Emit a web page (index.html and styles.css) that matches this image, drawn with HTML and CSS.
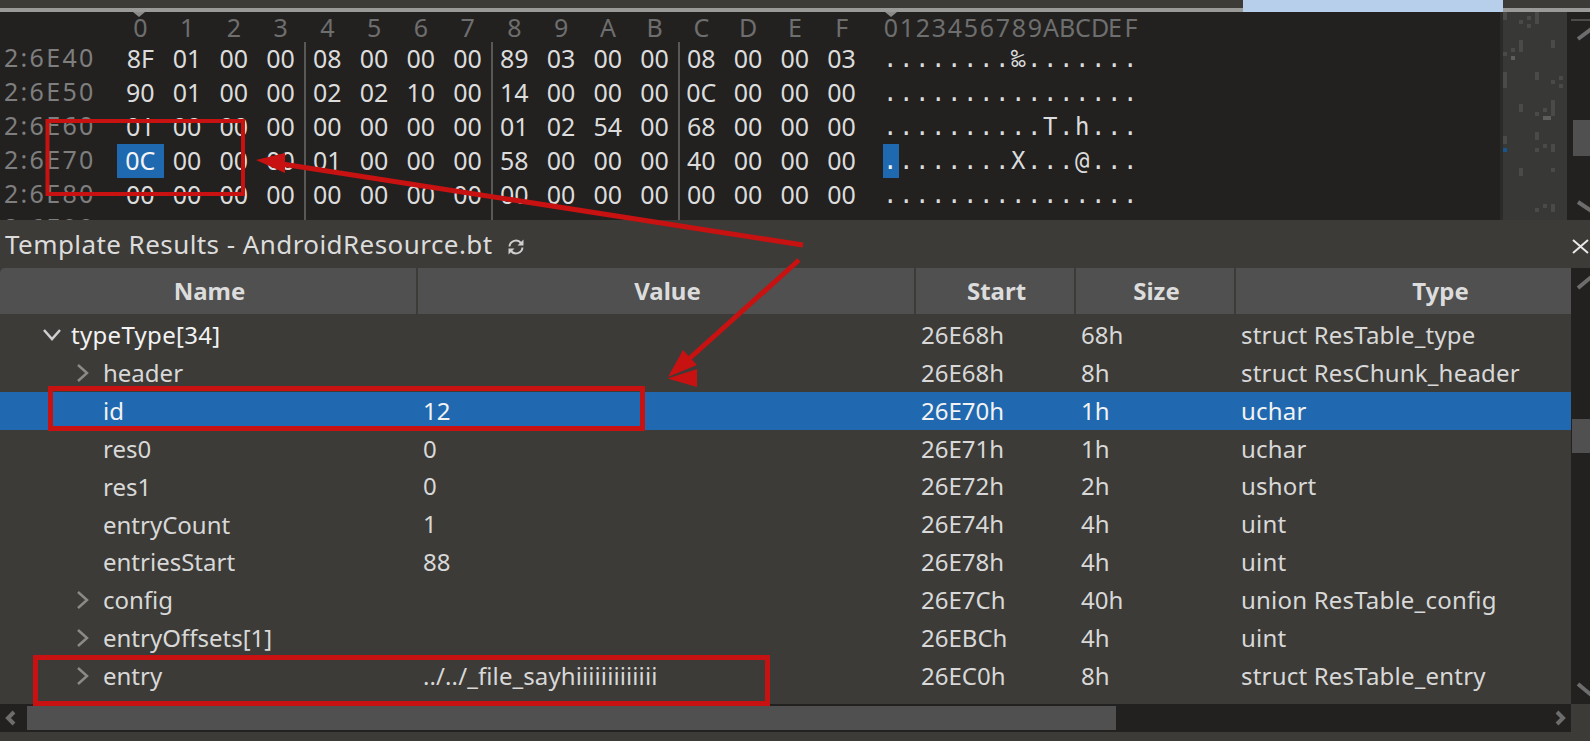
FILE: index.html
```html
<!DOCTYPE html>
<html lang="en">
<head>
<meta charset="utf-8">
<title>Template Results - AndroidResource.bt</title>
<link rel="stylesheet" href="styles.css">
</head>
<body>
<div class="app">
  <div class="ruler">
    <div class="ruler-track"></div>
    <div class="ruler-thumb"></div>
    <div class="ruler-track ruler-end"></div>
  </div>

  <section class="hexpane">
    <div class="hexview">
      <span class="marker marker-hex"></span>
      <span class="marker marker-asc"></span>
      <div class="hexrow hexhead">
        <span class="addr"></span>
        <span class="cell">0</span><span class="cell">1</span><span class="cell">2</span><span class="cell">3</span>
        <span class="cell">4</span><span class="cell">5</span><span class="cell">6</span><span class="cell">7</span>
        <span class="cell">8</span><span class="cell">9</span><span class="cell">A</span><span class="cell">B</span>
        <span class="cell">C</span><span class="cell">D</span><span class="cell">E</span><span class="cell">F</span>
        <span class="ascii ascii-head"><i>0</i><i>1</i><i>2</i><i>3</i><i>4</i><i>5</i><i>6</i><i>7</i><i>8</i><i>9</i><i>A</i><i>B</i><i>C</i><i>D</i><i>E</i><i>F</i></span>
      </div>
      <div class="hexrow">
        <span class="addr">2:6E40</span>
        <span class="cell">8F</span><span class="cell">01</span><span class="cell">00</span><span class="cell">00</span>
        <span class="cell sep">08</span><span class="cell">00</span><span class="cell">00</span><span class="cell">00</span>
        <span class="cell sep">89</span><span class="cell">03</span><span class="cell">00</span><span class="cell">00</span>
        <span class="cell sep">08</span><span class="cell">00</span><span class="cell">00</span><span class="cell">03</span>
        <span class="ascii">........‰.......</span>
      </div>
      <div class="hexrow">
        <span class="addr">2:6E50</span>
        <span class="cell">90</span><span class="cell">01</span><span class="cell">00</span><span class="cell">00</span>
        <span class="cell sep">02</span><span class="cell">02</span><span class="cell">10</span><span class="cell">00</span>
        <span class="cell sep">14</span><span class="cell">00</span><span class="cell">00</span><span class="cell">00</span>
        <span class="cell sep">0C</span><span class="cell">00</span><span class="cell">00</span><span class="cell">00</span>
        <span class="ascii">................</span>
      </div>
      <div class="hexrow">
        <span class="addr">2:6E60</span>
        <span class="cell">01</span><span class="cell">00</span><span class="cell">00</span><span class="cell">00</span>
        <span class="cell sep">00</span><span class="cell">00</span><span class="cell">00</span><span class="cell">00</span>
        <span class="cell sep">01</span><span class="cell">02</span><span class="cell">54</span><span class="cell">00</span>
        <span class="cell sep">68</span><span class="cell">00</span><span class="cell">00</span><span class="cell">00</span>
        <span class="ascii">..........T.h...</span>
      </div>
      <div class="hexrow">
        <span class="addr">2:6E70</span>
        <span class="cell cell-on">0C</span><span class="cell">00</span><span class="cell">00</span><span class="cell">00</span>
        <span class="cell sep">01</span><span class="cell">00</span><span class="cell">00</span><span class="cell">00</span>
        <span class="cell sep">58</span><span class="cell">00</span><span class="cell">00</span><span class="cell">00</span>
        <span class="cell sep">40</span><span class="cell">00</span><span class="cell">00</span><span class="cell">00</span>
        <span class="ascii"><b class="ascii-on">.</b>.......X...@...</span>
      </div>
      <div class="hexrow">
        <span class="addr">2:6E80</span>
        <span class="cell">00</span><span class="cell">00</span><span class="cell">00</span><span class="cell">00</span>
        <span class="cell sep">00</span><span class="cell">00</span><span class="cell">00</span><span class="cell">00</span>
        <span class="cell sep">00</span><span class="cell">00</span><span class="cell">00</span><span class="cell">00</span>
        <span class="cell sep">00</span><span class="cell">00</span><span class="cell">00</span><span class="cell">00</span>
        <span class="ascii">................</span>
      </div>
      <div class="hexrow">
        <span class="addr">2:6E90</span>
        <span class="cell">00</span><span class="cell">00</span><span class="cell">00</span><span class="cell">00</span>
        <span class="cell sep">00</span><span class="cell">00</span><span class="cell">00</span><span class="cell">00</span>
        <span class="cell sep">00</span><span class="cell">00</span><span class="cell">00</span><span class="cell">00</span>
        <span class="cell sep">00</span><span class="cell">00</span><span class="cell">00</span><span class="cell">00</span>
      </div>
    </div>

    <svg class="minimap" viewBox="9 36 192 624" width="64" height="208" aria-hidden="true">
      <g fill="#4a4a48">
        <rect x="9" y="36" width="12" height="24"/><rect x="105" y="36" width="12" height="36"/>
        <rect x="57" y="60" width="12" height="12"/><rect x="81" y="48" width="12" height="12"/>
        <rect x="81" y="72" width="12" height="12"/><rect x="57" y="120" width="12" height="36"/>
        <rect x="153" y="120" width="12" height="24"/><rect x="33" y="144" width="12" height="12"/>
        <rect x="9" y="156" width="12" height="12"/><rect x="9" y="216" width="12" height="48"/>
        <rect x="105" y="216" width="12" height="24"/><rect x="153" y="240" width="12" height="12"/>
        <rect x="177" y="228" width="12" height="12"/><rect x="177" y="252" width="12" height="12"/>
        <rect x="57" y="312" width="12" height="24"/><rect x="153" y="300" width="12" height="48"/>
        <rect x="129" y="324" width="12" height="12"/><rect x="105" y="336" width="12" height="12"/>
        <rect x="9" y="408" width="12" height="24"/><rect x="105" y="396" width="12" height="24"/>
        <rect x="129" y="432" width="12" height="12"/><rect x="153" y="432" width="12" height="24"/>
        <rect x="105" y="444" width="12" height="12"/><rect x="57" y="504" width="12" height="24"/>
        <rect x="153" y="504" width="12" height="12"/><rect x="129" y="612" width="12" height="12"/>
        <rect x="153" y="612" width="12" height="24"/><rect x="105" y="624" width="12" height="12"/>
      </g>
      <rect x="33" y="168" width="12" height="12" fill="#5e5e5c"/>
      <rect x="129" y="348" width="24" height="12" fill="#5e5e5c"/>
      <rect x="9" y="444" width="12" height="12" fill="#17558f"/>
    </svg>

    <svg class="hexscroll" width="23" height="208" aria-hidden="true">
      <rect x="4" y="7" width="19" height="2" fill="#4c4c4a"/>
      <path d="M11 27 L23 18 L35 27" class="arrow"/>
      <rect x="6" y="108" width="17" height="36" fill="#505050"/>
      <path d="M11 190 L23 198 L35 190" class="arrow"/>
    </svg>
  </section>

  <section class="results">
    <div class="results-title">
      <span class="title-text">Template Results - AndroidResource.bt</span>
      <svg class="refresh" width="20" height="20" viewBox="0 0 20 20" aria-hidden="true">
        <path d="M3.5 9.5 A6.5 6.5 0 0 1 15 6" class="refresh-arc"/>
        <path d="M16.5 10.5 A6.5 6.5 0 0 1 5 14" class="refresh-arc"/>
        <path d="M17.5 2.5 V8.5 H11.5 Z" fill="#cfcfcf"/>
        <path d="M2.5 17.5 V11.5 H8.5 Z" fill="#cfcfcf"/>
      </svg>
      <svg class="close" width="17" height="15" viewBox="0 0 17 15" aria-hidden="true">
        <path d="M1 1 L16 14 M16 1 L1 14" stroke="#e8e8e8" stroke-width="2" fill="none"/>
      </svg>
    </div>

    <div class="tablewrap">
      <div class="table">
        <div class="thead">
          <div class="th">Name</div>
          <div class="th">Value</div>
          <div class="th">Start</div>
          <div class="th">Size</div>
          <div class="th th-type">Type</div>
        </div>
        <div class="tbody">
          <div class="tr">
            <div class="td col-name lvl0">
              <svg class="tw" width="22" height="14" viewBox="0 0 22 14" aria-hidden="true"><path d="M2 2 L10 11 L18 2" class="tw-open"/></svg>typeType[34]
            </div>
            <div class="td col-value"></div><div class="td col-num">26E68h</div><div class="td col-num">68h</div><div class="td col-type">struct ResTable_type</div>
          </div>
          <div class="tr">
            <div class="td col-name lvl1">
              <svg class="tw" width="14" height="20" viewBox="0 0 14 20" aria-hidden="true"><path d="M2 2 L11 10 L2 18" class="tw-closed"/></svg>header
            </div>
            <div class="td col-value"></div><div class="td col-num">26E68h</div><div class="td col-num">8h</div><div class="td col-type">struct ResChunk_header</div>
          </div>
          <div class="tr tr-on">
            <div class="td col-name lvl1 leaf">id</div>
            <div class="td col-value">12</div><div class="td col-num">26E70h</div><div class="td col-num">1h</div><div class="td col-type">uchar</div>
          </div>
          <div class="tr">
            <div class="td col-name lvl1 leaf">res0</div>
            <div class="td col-value">0</div><div class="td col-num">26E71h</div><div class="td col-num">1h</div><div class="td col-type">uchar</div>
          </div>
          <div class="tr">
            <div class="td col-name lvl1 leaf">res1</div>
            <div class="td col-value">0</div><div class="td col-num">26E72h</div><div class="td col-num">2h</div><div class="td col-type">ushort</div>
          </div>
          <div class="tr">
            <div class="td col-name lvl1 leaf">entryCount</div>
            <div class="td col-value">1</div><div class="td col-num">26E74h</div><div class="td col-num">4h</div><div class="td col-type">uint</div>
          </div>
          <div class="tr">
            <div class="td col-name lvl1 leaf">entriesStart</div>
            <div class="td col-value">88</div><div class="td col-num">26E78h</div><div class="td col-num">4h</div><div class="td col-type">uint</div>
          </div>
          <div class="tr">
            <div class="td col-name lvl1">
              <svg class="tw" width="14" height="20" viewBox="0 0 14 20" aria-hidden="true"><path d="M2 2 L11 10 L2 18" class="tw-closed"/></svg>config
            </div>
            <div class="td col-value"></div><div class="td col-num">26E7Ch</div><div class="td col-num">40h</div><div class="td col-type">union ResTable_config</div>
          </div>
          <div class="tr">
            <div class="td col-name lvl1">
              <svg class="tw" width="14" height="20" viewBox="0 0 14 20" aria-hidden="true"><path d="M2 2 L11 10 L2 18" class="tw-closed"/></svg>entryOffsets[1]
            </div>
            <div class="td col-value"></div><div class="td col-num">26EBCh</div><div class="td col-num">4h</div><div class="td col-type">uint</div>
          </div>
          <div class="tr">
            <div class="td col-name lvl1">
              <svg class="tw" width="14" height="20" viewBox="0 0 14 20" aria-hidden="true"><path d="M2 2 L11 10 L2 18" class="tw-closed"/></svg>entry
            </div>
            <div class="td col-value value-long">../../_file_sayhiiiiiiiiiiiii</div><div class="td col-num">26EC0h</div><div class="td col-num">8h</div><div class="td col-type">struct ResTable_entry</div>
          </div>
        </div>
      </div>
      <svg class="tablescroll" width="19" height="436" aria-hidden="true">
        <path d="M7 20 L19 10 L31 20" class="arrow"/>
        <rect x="1" y="151" width="18" height="34" fill="#505050"/>
        <path d="M7 416 L19 426 L31 416" class="arrow"/>
      </svg>
    </div>

    <div class="hscroll">
      <svg class="hs-arrow" width="27" height="28" viewBox="0 0 27 28" aria-hidden="true"><path d="M14 8 L8 14 L14 20" class="arrow"/></svg>
      <div class="hs-thumb"></div>
      <svg class="hs-arrow hs-right" width="27" height="28" viewBox="0 0 27 28" aria-hidden="true"><path d="M13 8 L19 14 L13 20" class="arrow"/></svg>
    </div>
  </section>

  <svg class="annotations" width="1590" height="741" viewBox="0 0 1590 741" aria-hidden="true">
    <g fill="none" stroke="#c81212">
      <rect x="47.5" y="121" width="195.5" height="73" stroke-width="4"/>
      <rect x="50.5" y="388.5" width="592" height="40" stroke-width="5"/>
      <rect x="35.5" y="657.5" width="732" height="46" stroke-width="5"/>
      <path d="M803 245 L282 164" stroke-width="5"/>
      <path d="M799 260 L690 358" stroke-width="5"/>
    </g>
    <g fill="#c81212">
      <path d="M256 160 L285 153 L285 173 Z"/>
      <path d="M668 377 L683 350 L697 365 Z"/>
      <path d="M667.5 378.5 L697 369 L697 387 Z"/>
    </g>
  </svg>
</div>
</body>
</html>
```
FILE: styles.css
```css
* { box-sizing: border-box; }

html, body {
  margin: 0;
  width: 1590px;
  height: 741px;
  overflow: hidden;
  background: #3c3b37;
}

.app {
  position: relative;
  display: flex;
  flex-direction: column;
  width: 1590px;
  height: 741px;
  font-family: "Noto Sans", "Open Sans", sans-serif;
  color: #d8d8d8;
}

/* top overview ruler */
.ruler { display: flex; height: 12px; flex: none; }
.ruler-track { width: 1243px; background: #3c3b37; border-bottom: 4px solid #9a9a98; }
.ruler-end { width: 87px; }
.ruler-thumb { width: 260px; background: #b8cfeb; }

/* hex view */
.hexpane { display: flex; height: 208px; flex: none; background: #222120; overflow: hidden; }
.hexview { position: relative; width: 1503px; flex: none; border-right: 3px solid #2b2b29; }
.hexrow {
  display: flex;
  height: 34px;
  line-height: 32px;
  font-size: 25px;
  color: #dcdcdc;
}
.hexhead { height: 30px; line-height: 30px; color: #6e6e6e; }
.addr { width: 117px; flex: none; padding-left: 4px; color: #7e7e7e; letter-spacing: 2.3px; line-height: 30px; }
.cell { width: 46.75px; flex: none; text-align: center; }
.sep { box-shadow: inset 2px 0 0 0 #585856; }
.cell-on { background: #1f69b0; color: #f4f4f4; }
.ascii {
  margin-left: 18px;
  font-family: "DejaVu Sans Mono", monospace;
  font-size: 24px;
  line-height: 34px;
  letter-spacing: 1.55px;
  white-space: pre;
}
.ascii b { font-weight: normal; }
.ascii-on { display: inline-block; vertical-align: top; width: 16px; height: 34px; background: #1f69b0; color: #f4f4f4; }
.ascii-head {
  display: flex;
  font-family: "Noto Sans", "Open Sans", sans-serif;
  font-size: 25px;
  line-height: 30px;
  letter-spacing: 0;
}
.ascii-head i { width: 16px; font-style: normal; text-align: center; }
.marker {
  position: absolute;
  top: 0;
  width: 0;
  height: 0;
  border-left: 6px solid transparent;
  border-right: 6px solid transparent;
  border-top: 5px solid #8a8a88;
}
.marker-hex { left: 133px; }
.marker-asc { left: 885px; }

.minimap { flex: none; width: 64px; height: 208px; background: #383836; display: block; }
.hexscroll { flex: none; display: block; }
.arrow { fill: none; stroke: #6d6d6d; stroke-width: 4; }

/* results panel */
.results { flex: 1; display: flex; flex-direction: column; min-height: 0; background: #3c3b37; position: relative; }
.results-title {
  display: flex;
  align-items: center;
  height: 48px;
  flex: none;
  padding-left: 5px;
  font-size: 26px;
  color: #dcdcdc;
}
.title-text { letter-spacing: 0.43px; white-space: nowrap; }
.refresh { margin-left: 13px; margin-top: 6px; flex: none; }
.refresh-arc { fill: none; stroke: #cfcfcf; stroke-width: 2; }
.close { margin-left: auto; margin-top: 4px; margin-right: 1px; flex: none; }

.tablewrap { display: flex; height: 436px; flex: none; }
.table { width: 1571px; flex: none; overflow: hidden; }
.tablescroll { flex: none; display: block; background: #222120; }

.thead, .tr {
  display: grid;
  grid-template-columns: 418px 498px 160px 160px 335px;
}
.thead { height: 46px; background: #505050; border-top-left-radius: 5px; }
.th {
  font-weight: 700;
  font-size: 24px;
  line-height: 46px;
  text-align: center;
  padding-left: 3px;
  color: #dcdcdc;
  border-right: 2px solid #3c3b37;
}
.th-type { border-right: 0; padding-left: 74px; }

.tbody { padding-top: 2px; }
.tr { height: 37.85px; font-size: 24px; line-height: 37px; white-space: nowrap; }
.td.col-value, .td.col-num { padding-left: 5px; }
.value-long { letter-spacing: 0.1px; }
.td.col-type { padding-left: 5px; letter-spacing: 0.2px; }
.tr-on { background: #2069b0; color: #f2f2f2; }

.col-name { display: flex; align-items: center; }
.lvl0 { padding-left: 42px; color: #f2f2f2; letter-spacing: 0.3px; }
.lvl0 .tw { margin-right: 7px; }
.lvl1 { padding-left: 76px; }
.lvl1 .tw { margin-right: 13px; }
.leaf { padding-left: 103px; }
.tw { flex: none; }
.tw-open { fill: none; stroke: #cfcfcf; stroke-width: 2.5; }
.tw-closed { fill: none; stroke: #8a8a88; stroke-width: 2.5; }

.hscroll { display: flex; width: 1571px; height: 28px; flex: none; background: #222120; padding: 2px 0; align-items: center; }
.hs-arrow { flex: none; margin: -2px 0; }
.hs-thumb { width: 1089px; height: 24px; background: #505050; flex: none; }
.hs-right { margin-left: auto; }

/* red hand-drawn annotations over the screenshot */
.annotations { position: absolute; left: 0; top: 0; pointer-events: none; }
```
